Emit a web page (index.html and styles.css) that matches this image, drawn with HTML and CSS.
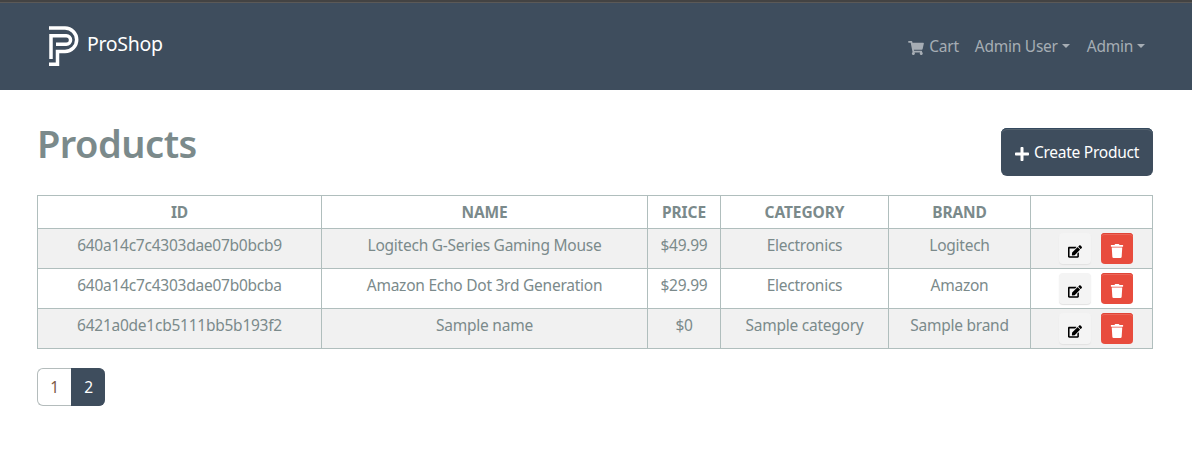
FILE: index.html
```html
<!DOCTYPE html>
<html lang="en">
<head>
<meta charset="utf-8">
<title>ProShop</title>
<link rel="stylesheet" href="styles.css">
</head>
<body>
<svg class="sprite" aria-hidden="true">
  <symbol id="edit" viewBox="0 0 576 512"><path d="M402.6 83.2l90.2 90.2c3.8 3.8 3.8 10 0 13.8L274.4 405.6l-92.8 10.3c-12.4 1.4-22.9-9.1-21.5-21.5l10.3-92.8L388.8 83.2c3.8-3.8 10-3.8 13.8 0zm162-22.9l-48.800-48.800c-15.200-15.200-39.900-15.200-55.200 0l-35.400 35.400c-3.800 3.800-3.800 10 0 13.800l90.200 90.200c3.800 3.800 10 3.800 13.800 0l35.400-35.400c15.200-15.300 15.200-40 0-55.200zM384 346.200V448H64V128h229.800c3.200 0 6.200-1.300 8.500-3.500l40-40c7.600-7.600 2.200-20.500-8.500-20.500H48C21.500 64 0 85.500 0 112v352c0 26.500 21.500 48 48 48h352c26.500 0 48-21.500 48-48V306.200c0-10.700-12.900-16-20.500-8.500l-40 40c-2.200 2.300-3.500 5.300-3.500 8.500z"/></symbol>
  <symbol id="trash" viewBox="0 0 448 512"><path d="M432 32H312l-9.400-18.700A24 24 0 0 0 281.100 0H166.800a23.720 23.720 0 0 0-21.400 13.300L136 32H16A16 16 0 0 0 0 48v32a16 16 0 0 0 16 16h416a16 16 0 0 0 16-16V48a16 16 0 0 0-16-16zM53.200 467a48 48 0 0 0 47.900 45h245.800a48 48 0 0 0 47.900-45L416 128H32z"/></symbol>
</svg>
<header class="navbar">
  <a class="brand">
    <svg class="logo" viewBox="0 0 30 40"><path d="M0 2H16a11.700 11.700 0 0 1 0 23.400H8.500V38.200H0M2 33V9.800H17.300a4.250 4.250 0 0 1 0 8.500H7"/></svg>
    <span class="brand-name">ProShop</span>
  </a>
  <nav class="nav">
    <a class="nav-link cart"><svg class="cart-icon" viewBox="0 0 576 512"><path d="M528.120 301.319l47.273-208C578.806 78.301 567.391 64 551.990 64H159.208l-9.166-44.810C147.758 8.021 137.930 0 126.529 0H24C10.745 0 0 10.745 0 24v16c0 13.255 10.745 24 24 24h69.883l70.248 343.435C147.325 417.100 136 435.222 136 456c0 30.928 25.072 56 56 56s56-25.072 56-56c0-15.674-6.447-29.835-16.824-40h209.647C430.447 426.165 424 440.326 424 456c0 30.928 25.072 56 56 56s56-25.072 56-56c0-22.172-12.888-41.332-31.579-50.405l5.517-24.276c3.413-15.018-8.002-29.319-23.403-29.319H218.117l-6.545-32h293.145c11.206 0 20.920-7.754 23.403-18.681z"/></svg><span>Cart</span></a>
    <a class="nav-link user"><span>Admin User</span><i class="caret"></i></a>
    <a class="nav-link"><span>Admin</span><i class="caret"></i></a>
  </nav>
</header>
<main class="content">
  <div class="heading">
    <h1>Products</h1>
    <button class="create"><svg class="plus" viewBox="0 0 448 512"><path d="M416 208H272V64c0-17.670-14.330-32-32-32h-32c-17.670 0-32 14.330-32 32v144H32c-17.670 0-32 14.330-32 32v32c0 17.670 14.330 32 32 32h144v144c0 17.670 14.330 32 32 32h32c17.670 0 32-14.330 32-32V304h144c17.670 0 32-14.330 32-32v-32c0-17.670-14.330-32-32-32z"/></svg><span>Create Product</span></button>
  </div>
  <table class="products">
    <colgroup><col class="c-id"><col class="c-name"><col class="c-price"><col class="c-category"><col class="c-brand"><col></colgroup>
    <thead><tr><th>ID</th><th>NAME</th><th>PRICE</th><th>CATEGORY</th><th>BRAND</th><th></th></tr></thead>
    <tbody>
      <tr><td>640a14c7c4303dae07b0bcb9</td><td>Logitech G-Series Gaming Mouse</td><td>$49.99</td><td>Electronics</td><td>Logitech</td>
        <td><div class="actions"><button class="btn light"><svg><use href="#edit"/></svg></button><button class="btn danger"><svg><use href="#trash"/></svg></button></div></td></tr>
      <tr><td>640a14c7c4303dae07b0bcba</td><td>Amazon Echo Dot 3rd Generation</td><td>$29.99</td><td>Electronics</td><td>Amazon</td>
        <td><div class="actions"><button class="btn light"><svg><use href="#edit"/></svg></button><button class="btn danger"><svg><use href="#trash"/></svg></button></div></td></tr>
      <tr><td>6421a0de1cb5111bb5b193f2</td><td>Sample name</td><td>$0</td><td>Sample category</td><td>Sample brand</td>
        <td><div class="actions"><button class="btn light"><svg><use href="#edit"/></svg></button><button class="btn danger"><svg><use href="#trash"/></svg></button></div></td></tr>
    </tbody>
  </table>
  <div class="pagination"><a class="page">1</a><a class="page active">2</a></div>
</main>
</body>
</html>
```
FILE: styles.css
```css
* { box-sizing: border-box; }
body {
  margin: 0;
  background: #fff;
  color: #7b8a8b;
  font: 15.5px/24px "Noto Sans", "Open Sans", sans-serif;
  letter-spacing: -.25px;
}
button { font: inherit; letter-spacing: inherit; border: 0; padding: 0; }
.sprite { display: none; }
.navbar {
  height: 90px;
  padding: 0 47px 0 49px;
  display: flex;
  justify-content: space-between;
  background: #3e4d5d;
  border-top: 2px solid #434343;
  box-shadow: inset 0 1px #5b5957;
}
.brand { display: flex; gap: 8px; padding-top: 24px; color: #fff; }
.logo { width: 30px; height: 40px; fill: none; stroke: #fff; stroke-width: 3.5; }
.brand-name { font-size: 19.5px; line-height: 36px; letter-spacing: -.3px; }
.nav { display: flex; padding-top: 32px; color: #a6adb4; }
.nav-link { display: flex; }
.cart { margin-right: 16px; }
.user { margin-right: 17px; }
.cart-icon { width: 16px; height: 14px; margin: 7px 5px 0 0; fill: currentColor; }
.caret {
  margin: 10px 0 0 4px;
  width: 8px;
  height: 4px;
  border: 4px solid transparent;
  border-top-color: currentColor;
  border-bottom: 0;
}
.content { padding: 30px 39px 0 37px; }
.heading { display: flex; justify-content: space-between; height: 75px; }
h1 { margin: 0; font-size: 38px; font-weight: 600; line-height: 46px; letter-spacing: -.5px; }
.create {
  width: 152px;
  height: 48px;
  margin-top: 8px;
  display: flex;
  align-items: center;
  justify-content: center;
  gap: 5px;
  color: #fff;
  background: #3e4d5d;
  border-radius: 6px;
  box-shadow: inset 0 1px #34495e, inset 0 2px #55636f;
}
.plus { width: 14px; height: 16px; margin-top: 4px; fill: currentColor; }
.products {
  width: 1116px;
  table-layout: fixed;
  border-collapse: separate;
  border-spacing: 0;
  border: solid #b0bebd;
  border-width: 0 1px 1px 0;
  text-align: center;
}
.c-id { width: 284px; }
.c-name { width: 326px; }
.c-price { width: 73px; }
.c-category { width: 168px; }
.c-brand { width: 142px; }
th, td { border: solid #b0bebd; border-width: 1px 0 0 1px; padding: 4px 0; vertical-align: top; white-space: nowrap; }
th { height: 33px; font-weight: 700; letter-spacing: -.1px; }
td { height: 40px; }
tbody tr:nth-child(odd) { background: #f1f1f1; }
.actions { display: flex; justify-content: center; gap: 10px; padding-left: 8px; }
.btn { width: 32px; height: 31px; display: grid; place-items: center; padding-top: 5px; border-radius: 4px; }
.btn svg { width: 14px; height: 14px; }
.light { background: #f4f4f4; color: #000; box-shadow: 0 1px 1px #e2e2e2; }
.light svg { height: 13px; }
.danger { background: #e84c3d; fill: #fff; box-shadow: inset 0 1px #df4537, inset 0 2px #ed6659; }
.pagination { display: flex; margin-top: 19px; }
.page {
  width: 34px;
  height: 38px;
  line-height: 36px;
  text-align: center;
  color: #7b5a44;
  border: 1px solid #b4bcbc;
  border-right: 0;
  border-radius: 6px 0 0 6px;
}
.page.active { background: #3e4d5d; border-color: #3e4d5d; color: #fff; border-radius: 0 6px 6px 0; }
```
